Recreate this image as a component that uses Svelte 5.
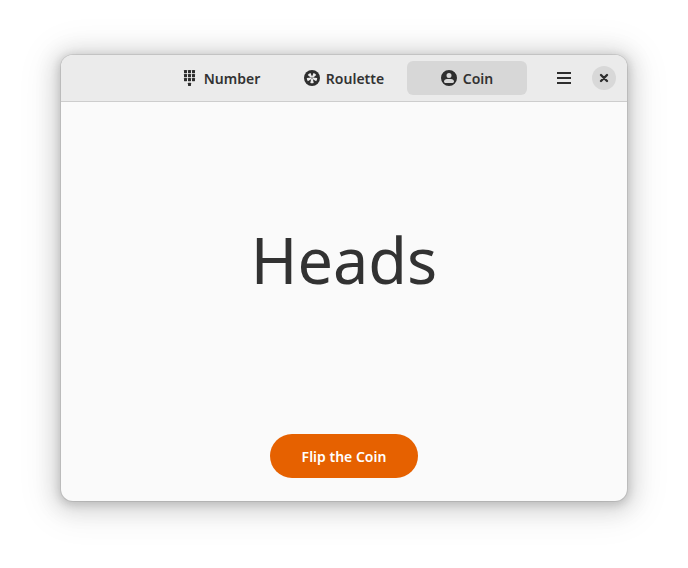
<script>
  let result = $state('Heads');
  let current = $state('Coin');
  const tabs = ['Number', 'Roulette', 'Coin'];
  const cols = [2, 6, 10];
  const rows = [0, 4, 8];
  const blades = [36, 108, 180, 252, 324];

  function flip() {
    result = Math.random() < 0.5 ? 'Heads' : 'Tails';
  }
</script>

<div class="desktop">
  <main class="window">
    <header>
      <nav aria-label="Modes">
        {#each tabs as tab}
          <button class="tab" class:active={current === tab} onclick={() => (current = tab)}>
            <svg width="16" height="16" viewBox="0 0 16 16" aria-hidden="true">
              {#if tab === 'Number'}
                {#each rows as y}
                  {#each cols as x}
                    <rect {x} {y} width="3" height="3.2" rx="0.4" />
                  {/each}
                {/each}
                <rect x="6" y="12.8" width="3" height="3.2" rx="0.4" />
              {:else if tab === 'Roulette'}
                <circle cx="8" cy="8" r="8" />
                {#each blades as angle}
                  <path
                    class="cut"
                    transform="rotate({angle} 8 8)"
                    d="M7.4 8 6.3 3.100A5.200 5.200 0 0 1 9.700 3.100L8.600 8Z"
                  />
                {/each}
                <circle cx="8" cy="8" r="0.7" />
              {:else}
                <path
                  fill-rule="evenodd"
                  d="M8 0a8 8 0 1 0 0 16A8 8 0 0 0 8 0ZM8 3a2.5 2.5 0 1 1 0 5 2.5 2.5 0 0 1 0-5ZM6 9h4c1.6 0 3 1.2 3 2.6 0 .9-.5 1.4-1.4 1.4H4.4C3.5 13 3 12.500 3 11.600 3 10.200 4.400 9 6 9Z"
                />
              {/if}
            </svg>
            <span>{tab}</span>
          </button>
        {/each}
      </nav>
      <div class="controls">
        <button class="menu" aria-label="Main menu">
          <svg width="16" height="16" viewBox="0 0 16 16" aria-hidden="true">
            <path d="M1 2h14v2H1zM1 7h14v2H1zM1 12h14v2H1z" />
          </svg>
        </button>
        <button class="close" aria-label="Close">
          <svg width="16" height="16" viewBox="0 0 16 16" aria-hidden="true">
            <path class="cross" d="M5 5l6 6M11 5l-6 6" />
          </svg>
        </button>
      </div>
    </header>
    <section>
      <output>{result}</output>
      <button class="flip" onclick={flip}><span>Flip the Coin</span></button>
    </section>
  </main>
</div>

<style>
  :global(body) {
    margin: 0;
    background: #fff;
  }
  .desktop {
    box-sizing: border-box;
    min-height: 100vh;
    padding: 55px 61px 67px;
    display: flex;
    font-family: 'Noto Sans', 'Open Sans', sans-serif;
    color: #323232;
  }
  .window {
    flex: 1;
    display: flex;
    flex-direction: column;
    border-radius: 12px;
    overflow: hidden;
    background: #fafafa;
    box-shadow:
      0 0 0 1px rgba(0, 0, 0, 0.08),
      0 2px 8px 2px rgba(0, 0, 0, 0.14),
      0 3px 20px 8px rgba(0, 0, 0, 0.11),
      0 4px 36px 14px rgba(0, 0, 0, 0.06);
  }
  header {
    display: grid;
    grid-template-columns: 1fr auto 1fr;
    align-items: center;
    height: 46px;
    background: #ebebeb;
    border-bottom: 1px solid #cdcdcd;
  }
  nav {
    grid-column: 2;
    display: flex;
    gap: 3px;
  }
  button {
    display: flex;
    align-items: center;
    justify-content: center;
    padding: 0;
    border: 0;
    background: none;
    color: inherit;
    font: 600 14px/20px 'Noto Sans', 'Open Sans', sans-serif;
  }
  button span {
    padding-top: 2px;
  }
  .tab {
    width: 120px;
    height: 34px;
    gap: 6px;
    border-radius: 6px;
  }
  .active {
    background: #d7d7d7;
  }
  svg {
    display: block;
    fill: #2e2e2e;
  }
  .cut {
    fill: #ebebeb;
  }
  .cross {
    fill: none;
    stroke: #2e2e2e;
    stroke-width: 2.4;
    stroke-linecap: round;
  }
  .controls {
    display: flex;
    align-items: center;
    justify-content: flex-end;
    gap: 11px;
    padding-right: 11px;
  }
  .menu {
    width: 34px;
    height: 34px;
  }
  .close {
    width: 24px;
    height: 24px;
    border-radius: 50%;
    background: #d8d8d8;
  }
  section {
    flex: 1;
    display: flex;
    flex-direction: column;
    align-items: center;
    padding-bottom: 23px;
  }
  output {
    flex: 1;
    display: flex;
    align-items: center;
    padding-bottom: 16px;
    font-size: 63px;
    line-height: 80px;
  }
  .flip {
    height: 44px;
    padding: 0 32px;
    border-radius: 22px;
    background: #e66100;
    color: #fff;
  }
</style>
